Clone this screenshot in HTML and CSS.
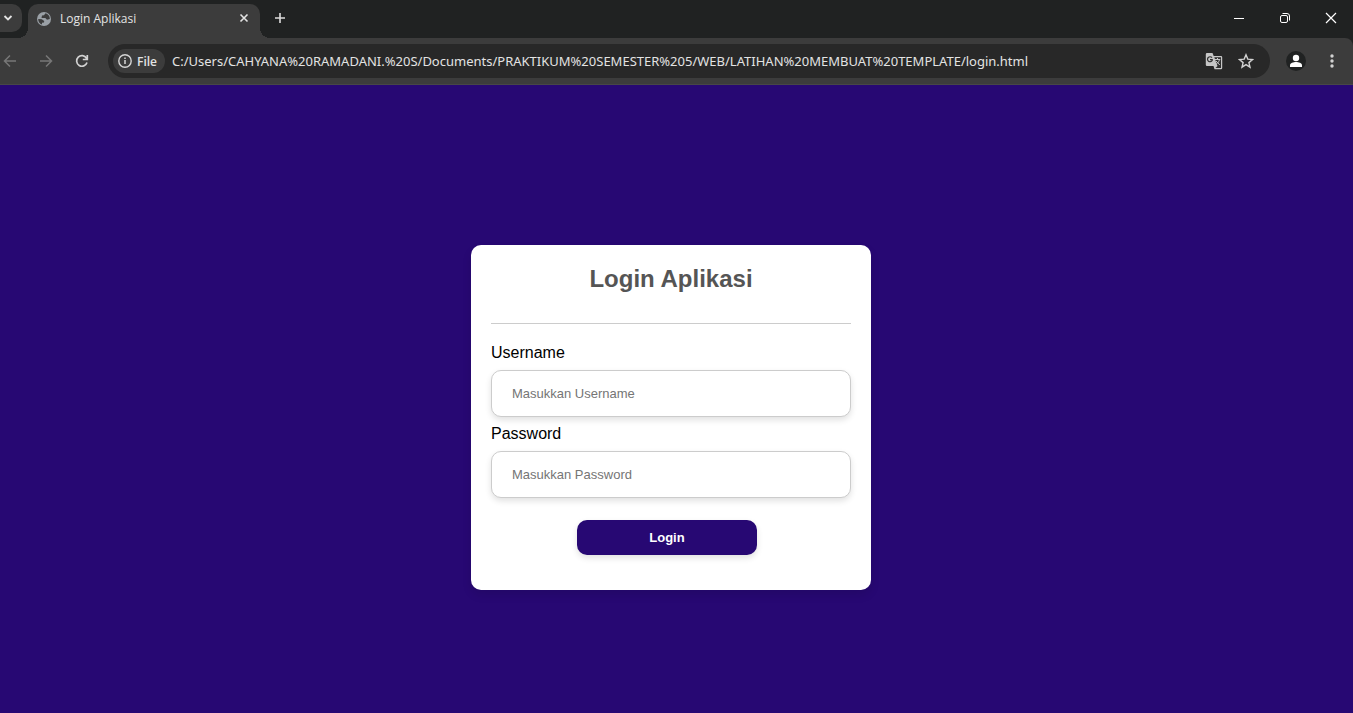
FILE: index.html
```html
<!DOCTYPE html>
<html lang="id">
<head>
<meta charset="utf-8">
<title>Login Aplikasi</title>
<link rel="stylesheet" href="styles.css">
</head>
<body>
<header class="browser">
  <div class="tabstrip">
    <button class="tab-search" aria-label="Search tabs"><svg width="16" height="16" viewBox="0 0 16 16"><path d="M4.500 6l3.500 3.500L11.500 6" fill="none" stroke="#e3e3e3" stroke-width="1.800"/></svg></button>
    <div class="tab">
      <svg class="tab-icon" width="16" height="16" viewBox="0 0 16 16"><circle cx="8" cy="8" r="7" fill="#9aa0a6"/><path d="M9.500 2.300L8 4.300 6 4.500 5.500 7H9.300L11 8.800 13.800 8C13.900 5 12 2.800 9.500 2.300zM2.200 8L5.800 8.200 8.200 10 8 11.500 6 11.800V13.600C3.700 12.800 2.100 10.500 2.200 8z" fill="#3c3c3c"/></svg>
      <span class="tab-title">Login Aplikasi</span>
      <button class="icon-button" aria-label="Close tab"><svg width="16" height="16" viewBox="0 0 16 16"><path d="M4.500 3.500l7 7M11.500 3.500l-7 7" stroke="#e3e3e3" stroke-width="1.600"/></svg></button>
    </div>
    <button class="new-tab icon-button" aria-label="New tab"><svg width="16" height="16" viewBox="0 0 16 16"><path d="M8 3v10M3 8h10" stroke="#dcdcdc" stroke-width="1.600"/></svg></button>
    <div class="window-controls">
      <button class="icon-button" aria-label="Minimize"><svg width="16" height="16" viewBox="0 0 16 16"><path d="M3 8.500h10" stroke="#fff"/></svg></button>
      <button class="icon-button" aria-label="Restore"><svg width="16" height="16" viewBox="0 0 16 16" fill="none" stroke="#fff"><rect x="3.500" y="5.500" width="7" height="7" rx="1.500"/><path d="M5.500 3.500H10a2.500 2.500 0 0 1 2.500 2.500v4.500"/></svg></button>
      <button class="icon-button" aria-label="Close window"><svg width="16" height="16" viewBox="0 0 16 16"><path d="M3 3l10 10M13 3L3 13" stroke="#fff" stroke-width="1.200"/></svg></button>
    </div>
  </div>
  <div class="toolbar">
    <div class="navigation">
      <button class="icon-button" aria-label="Back"><svg width="16" height="16" viewBox="0 0 16 16" fill="none" stroke="#777" stroke-width="1.500"><path d="M14 8H3M8 2.500L2.500 8 8 13.500"/></svg></button>
      <button class="icon-button" aria-label="Forward"><svg width="16" height="16" viewBox="0 0 16 16" fill="none" stroke="#777" stroke-width="1.500"><path d="M2 8h11M8 2.500L13.500 8 8 13.500"/></svg></button>
      <button class="icon-button" aria-label="Reload"><svg width="16" height="16" viewBox="0 0 16 16" fill="none" stroke="#d2d2d2" stroke-width="1.700"><path d="M13 9.500A5.300 5.300 0 1 1 12.500 5.200M13.300 2v4.500H8.800"/></svg></button>
    </div>
    <div class="address-bar">
      <button class="file-chip"><svg width="16" height="16" viewBox="0 0 16 16"><circle cx="8" cy="8" r="6.200" fill="none" stroke="#d6d6d6" stroke-width="1.400"/><path d="M8 7v4M8 4.500V6" stroke="#d6d6d6" stroke-width="1.500"/></svg>File</button>
      <input class="url" aria-label="Address" value="C:/Users/CAHYANA%20RAMADANI.%20S/Documents/PRAKTIKUM%20SEMESTER%205/WEB/LATIHAN%20MEMBUAT%20TEMPLATE/login.html">
      <button class="icon-button" aria-label="Translate"><svg width="18" height="18" viewBox="0 0 18 18" fill="none"><path d="M2 1h5.500l1.200 3H16a1.200 1.200 0 0 1 1.200 1.200V16a1.200 1.200 0 0 1-1.200 1.200H9.500L8.500 14H2A1.200 1.200 0 0 1 .8 12.800V2.200A1.200 1.200 0 0 1 2 1z" fill="#c7c7c7"/><path d="M9.300 5.200H16V16h-5.500l2-2z" fill="#303030"/><path d="M7 5.700A2.500 2.500 0 1 0 7.200 8.500V7.600H5" stroke="#303030" stroke-width="1.200"/><path d="M10 7.500h5.300M12.500 6v1.500M14.500 7.500C14 10 12.500 11.300 11 12.300M11 9l3.800 4" stroke="#c7c7c7"/></svg></button>
      <button class="icon-button" aria-label="Bookmark"><svg width="16" height="16" viewBox="0 0 16 16"><path d="M8 1.800l1.800 4.300 4.700.4-3.600 3.100 1.100 4.600L8 11.700l-4 2.500 1.100-4.600-3.600-3.100 4.700-.4z" fill="none" stroke="#d2d2d2" stroke-width="1.400"/></svg></button>
    </div>
    <button class="profile" aria-label="Profile"><svg width="20" height="20" viewBox="0 0 20 20"><circle cx="10" cy="7" r="3.200" fill="#fff"/><path d="M4 16v-1.700C4 12 7.500 11 10 11s6 1 6 3.300V16z" fill="#fff"/></svg></button>
    <button class="icon-button" aria-label="Menu"><svg width="16" height="16" viewBox="0 0 16 16" fill="#d2d2d2"><circle cx="8" cy="3" r="1.700"/><circle cx="8" cy="8" r="1.700"/><circle cx="8" cy="13" r="1.700"/></svg></button>
  </div>
</header>
<main class="page">
  <form class="card">
    <h1 class="card-title">Login Aplikasi</h1>
    <label class="label" for="username">Username</label>
    <input class="field" id="username" type="text" placeholder="Masukkan Username">
    <label class="label" for="password">Password</label>
    <input class="field" id="password" type="password" placeholder="Masukkan Password">
    <button class="login" type="button">Login</button>
  </form>
</main>
</body>
</html>
```

FILE: styles.css
```css
* { box-sizing: border-box; }
body {
  margin: 0;
  min-height: 100vh;
  display: flex;
  flex-direction: column;
  background: #270873;
  font-family: "Liberation Sans", Arial, sans-serif;
}
button, input { font-family: inherit; margin: 0; }
svg { display: block; }
.browser { background: #202222; font-family: "Noto Sans", "Open Sans", sans-serif; color: #e3e3e3; }
.tabstrip { display: flex; height: 38px; padding-top: 4px; }
.icon-button { display: grid; place-items: center; padding: 0; border: 0; background: none; }
.tab-search {
  width: 22px;
  height: 28px;
  padding: 0;
  border: 0;
  border-radius: 0 10px 10px 0;
  background: #3c3c3c;
}
.tab {
  position: relative;
  display: flex;
  align-items: center;
  gap: 8px;
  width: 232px;
  margin-left: 6px;
  padding: 0 8px 5px;
  border-radius: 10px 10px 0 0;
  background: #3c3c3c;
}
.tab::before, .tab::after {
  content: "";
  position: absolute;
  bottom: 0;
  width: 10px;
  height: 10px;
}
.tab::before { right: 100%; background: radial-gradient(circle at 0 0, transparent 10px, #3c3c3c 10px); }
.tab::after { left: 100%; background: radial-gradient(circle at 100% 0, transparent 10px, #3c3c3c 10px); }
.tab-title { flex: 1; font-family: "Open Sans", sans-serif; font-size: 12px; }
.new-tab { width: 28px; height: 28px; margin-left: 6px; }
.window-controls { display: flex; gap: 30px; height: 28px; margin-left: auto; padding-right: 14px; }
.toolbar {
  display: flex;
  align-items: center;
  height: 47px;
  padding: 0 13px 0 2px;
  border-radius: 0 8px 0 0;
  border-bottom: 1px solid #474747;
  background: #3c3c3c;
}
.navigation { display: flex; gap: 20px; margin-right: 18px; }
.address-bar {
  flex: 1;
  display: flex;
  align-items: center;
  gap: 15px;
  height: 34px;
  padding: 0 16px 0 5px;
  border-radius: 17px;
  background: #282828;
}
.file-chip {
  display: flex;
  align-items: center;
  gap: 4px;
  height: 24px;
  padding: 0 8px 0 4px;
  border: 0;
  border-radius: 12px;
  background: #3c3c3c;
  color: #e3e3e3;
  font-family: "Open Sans", sans-serif;
  font-size: 12px;
  font-weight: 600;
}
.url {
  flex: 1;
  min-width: 0;
  margin-left: -8px;
  padding: 0;
  border: 0;
  background: none;
  color: #e3e3e3;
  font-size: 13px;
}
.profile {
  display: grid;
  place-items: center;
  width: 20px;
  height: 20px;
  margin: 0 18px 0 16px;
  padding: 0;
  border: 0;
  border-radius: 50%;
  background: #202222;
}
.page { flex: 1; display: grid; place-items: center; padding: 37px 11px 0 0; }
.card {
  display: flex;
  flex-direction: column;
  width: 400px;
  max-width: 100%;
  padding: 20px 20px 35px;
  border-radius: 10px;
  background: #fff;
  box-shadow: 0 5px 10px rgba(0, 0, 0, 0.1);
}
.card-title {
  margin: 0 0 20px;
  padding-bottom: 30px;
  border-bottom: 1px solid #ccc;
  color: #555;
  font-size: 24px;
  line-height: 28px;
  text-align: center;
}
.label { margin-bottom: 8px; font-size: 16px; line-height: 18px; color: #000; }
.field {
  height: 47px;
  margin-bottom: 8px;
  padding: 0 20px;
  border: 1px solid #ccc;
  border-radius: 10px;
  background: #fff;
  box-shadow: 0 3px 6px rgba(0, 0, 0, 0.12);
  font-size: 13px;
}
.field::placeholder { color: #757575; }
.login {
  align-self: center;
  width: 50%;
  height: 35px;
  margin: 14px 8px 0 0;
  padding: 0;
  border: 0;
  border-radius: 10px;
  background: #270873;
  color: #fff;
  box-shadow: 0 3px 6px rgba(0, 0, 0, 0.12);
  font-size: 13px;
  font-weight: 700;
}
```
